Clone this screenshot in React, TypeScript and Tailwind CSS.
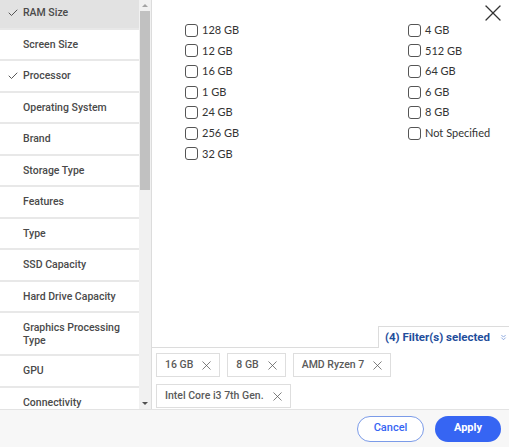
import { X, ChevronsDown, Check } from "lucide-react";

const categories = [
  { label: "RAM Size", checked: true, active: true },
  { label: "Screen Size" },
  { label: "Processor", checked: true },
  { label: "Operating System" },
  { label: "Brand" },
  { label: "Storage Type" },
  { label: "Features" },
  { label: "Type" },
  { label: "SSD Capacity" },
  { label: "Hard Drive Capacity" },
  { label: "Graphics Processing Type", tall: true },
  { label: "GPU" },
  { label: "Connectivity" },
];

const leftOptions = ["128 GB", "12 GB", "16 GB", "1 GB", "24 GB", "256 GB", "32 GB"];
const rightOptions = ["4 GB", "512 GB", "64 GB", "6 GB", "8 GB", "Not Specified"];
const chips = ["16 GB", "8 GB", "AMD Ryzen 7", "Intel Core i3 7th Gen."];

const Option = ({ label }: { label: string }) => (
  <label className="flex h-[20.6px] items-center gap-[4px] font-['Lato',sans-serif] text-[11px] text-[#333]">
    <span className="h-[13px] w-[13px] shrink-0 rounded-[3px] border-[1.5px] border-[#555] bg-white" />
    <span>{label}</span>
  </label>
);

export default function App() {
  return (
    <div className="flex h-[447px] w-[509px] flex-col overflow-hidden bg-white font-['Roboto',sans-serif]">
      <div className="flex h-[409px]">
        {/* category list */}
        <div className="h-full w-[139px] overflow-hidden bg-[#e8e8e8]">
          <div className="-mt-[2px] flex flex-col gap-[2px]">
            {categories.map((c) => (
              <div
                key={c.label}
                className={`flex items-center pr-3 text-[10.5px] font-medium leading-[13px] text-[#4a4a4a] ${
                  c.tall ? "h-[41px]" : "h-[29.5px]"
                } ${c.active ? "bg-[#e2e2e2]" : "bg-white"}`}
              >
                <span className="flex w-[23px] shrink-0 justify-center pl-[2px]">
                  {c.checked && <Check size={12} strokeWidth={1.8} className="text-[#444]" />}
                </span>
                <span>{c.label}</span>
              </div>
            ))}
          </div>
        </div>
        {/* scrollbar */}
        <div className="flex h-full w-[12px] flex-col items-center bg-[#f1f1f1]">
          <div className="mt-[4px] h-0 w-0 border-x-[3px] border-b-[3px] border-x-transparent border-b-[#a3a3a3]" />
          <div className="mt-[4px] h-[179px] w-[10px] bg-[#c1c1c1]" />
          <div className="flex-1" />
          <div className="mb-[4px] h-0 w-0 border-x-[3px] border-t-[3px] border-x-transparent border-t-[#505050]" />
        </div>
        {/* content */}
        <div className="flex flex-1 flex-col border-l border-[#dcdcdc]">
          <div className="relative flex flex-1 flex-col">
            <button className="absolute right-[2px] top-[-1px] text-[#333]">
              <X size={28} strokeWidth={1.1} />
            </button>
            <div className="flex pl-[33px] pt-[20px]">
              <div className="flex w-[223px] flex-col">
                {leftOptions.map((o) => (
                  <Option key={o} label={o} />
                ))}
              </div>
              <div className="flex flex-col">
                {rightOptions.map((o) => (
                  <Option key={o} label={o} />
                ))}
              </div>
            </div>
            <div className="flex-1" />
            <div className="flex h-[22px]">
              <div className="flex-1 border-b border-[#dcdcdc]" />
              <div className="flex w-[131px] items-center gap-[9px] whitespace-nowrap border-l border-t border-[#dcdcdc] pl-[6px] text-[11.5px] font-bold text-[#1f4e9c]">
                <span>(4) Filter(s) selected</span>
                <ChevronsDown size={9} strokeWidth={2} className="text-[#6b8fd6]" />
              </div>
            </div>
          </div>
          <div className="flex h-[61px] flex-wrap content-start gap-x-[7px] gap-y-[7px] pl-[4px] pt-[5px]">
            {chips.map((c) => (
              <div
                key={c}
                className="flex h-[24px] items-center gap-[6px] border border-[#dedede] pl-[8px] pr-[5px] text-[10.5px] font-medium text-[#5a5a5a]"
              >
                <span>{c}</span>
                <X size={15} strokeWidth={1.2} className="text-[#555]" />
              </div>
            ))}
          </div>
        </div>
      </div>
      <div className="flex h-[38px] items-center justify-end gap-[11px] border-t border-[#e3e3e3] bg-[#f7f7f7] pr-[8px]">
        <button className="h-[26px] w-[67px] rounded-full border border-[#7b9be8] bg-white text-[11px] font-medium text-[#3665f3]">
          Cancel
        </button>
        <button className="h-[26px] w-[66px] rounded-full bg-[#3665f3] text-[11px] font-bold text-white">
          Apply
        </button>
      </div>
    </div>
  );
}
